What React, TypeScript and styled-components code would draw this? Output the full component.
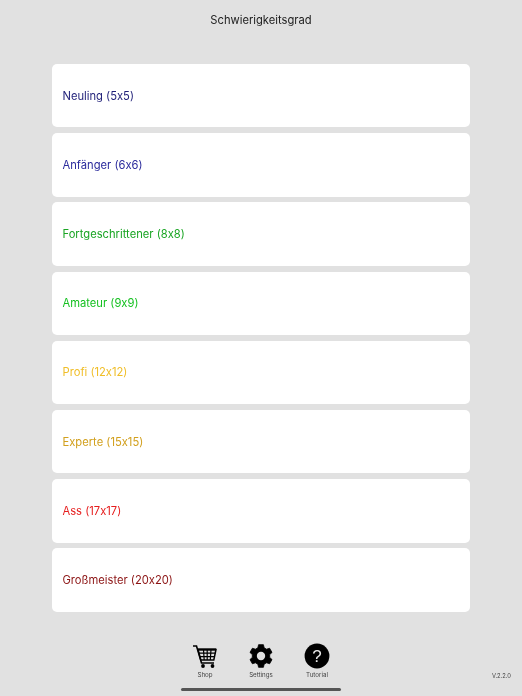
import React from "react";
import styled, { createGlobalStyle } from "styled-components";

const Global = createGlobalStyle`
  html, body { margin: 0; padding: 0; background: #e1e1e1; }
  body {
    font-family: Inter, "Liberation Sans", Arial, sans-serif;
    font-feature-settings: "calt" 0;
  }
`;

const Page = styled.div`
  position: relative;
  width: 522px;
  height: 696px;
  overflow: hidden;
  background: #e1e1e1;
  filter: blur(0.3px);
`;

const Title = styled.h1`
  margin: 0;
  height: 64px;
  padding-top: 13px;
  box-sizing: border-box;
  text-align: center;
  font-size: 11.2px;
  line-height: 15px;
  font-weight: 400;
  color: #222;
`;

const List = styled.div`
  display: flex;
  flex-direction: column;
  gap: 5.8px;
  margin: 0 52px;
`;

const Row = styled.div<{ $color: string }>`
  height: 63.4px;
  display: flex;
  align-items: center;
  padding-left: 10.5px;
  background: #fff;
  border-radius: 5px;
  font-size: 11.2px;
  color: ${(p) => p.$color};
`;

const Footer = styled.div`
  display: grid;
  grid-template-columns: 1fr auto 1fr;
  margin-top: 31.2px;
`;

const Tabs = styled.div`
  grid-column: 2;
  display: flex;
  gap: 30px;
`;

const Tab = styled.div`
  width: 26px;
  display: flex;
  flex-direction: column;
  align-items: center;
  font-size: 6.2px;
  line-height: 7px;
  white-space: nowrap;
  color: #444;
`;

const IconSlot = styled.div`
  height: 26px;
  margin-bottom: 2px;
  display: flex;
  align-items: center;
  justify-content: center;
`;

const Version = styled.div`
  grid-column: 3;
  justify-self: end;
  align-self: end;
  margin-right: 11px;
  margin-bottom: -2px;
  font-size: 5.8px;
  line-height: 8px;
  color: #444;
`;

const HomeBar = styled.div`
  position: absolute;
  left: 181px;
  bottom: 5px;
  width: 160px;
  height: 3px;
  border-radius: 2px;
  background: #555;
`;

const CartIcon = () => (
  <svg width="26" height="26" viewBox="0 0 26 26" fill="none" stroke="#000">
    <path d="M1 3h3.500L9.500 20H22" strokeWidth="1.600" />
    <path d="M6 6.500h18l-2.200 10.500H8.800z" strokeWidth="1.500" />
    <path d="M6 6.500h18" strokeWidth="2.200" />
    <path d="M11.500 6.500l.7 10.500M15.200 6.500v10.500M19 6.500l-.7 10.500M7 10.200h16.400M8 13.600h14.800" strokeWidth="1.200" />
    <circle cx="11" cy="23" r="1.900" fill="#000" stroke="none" />
    <circle cx="20.500" cy="23" r="1.900" fill="#000" stroke="none" />
  </svg>
);

const gearPath = (() => {
  const pts: string[] = [];
  const polar = (r: number, deg: number) => {
    const a = ((deg - 90) * Math.PI) / 180;
    return `${(13 + r * Math.cos(a)).toFixed(2)} ${(13 + r * Math.sin(a)).toFixed(2)}`;
  };
  for (let i = 0; i < 6; i++) {
    const c = i * 60;
    pts.push(polar(8.8, c - 21), polar(11.6, c - 12), polar(11.6, c + 12), polar(8.8, c + 21));
  }
  return `M${pts.join("L")}z`;
})();

const GearIcon = () => (
  <svg width="26" height="26" viewBox="0 0 26 26">
    <path d={gearPath} fill="#000" stroke="#000" strokeWidth="0.8" strokeLinejoin="round" />
    <circle cx="13" cy="13" r="4.200" fill="#e1e1e1" />
  </svg>
);

const HelpIcon = () => (
  <svg width="26" height="26" viewBox="0 0 26 26">
    <circle cx="13" cy="13" r="12.400" fill="#000" />
    <text x="13" y="19.200" textAnchor="middle" fontSize="17" fontFamily="Liberation Sans, Arial, sans-serif" fill="#e8e8e8">?</text>
  </svg>
);

const levels = [
  { label: "Neuling (5x5)", color: "#1f1f78" },
  { label: "Anfänger (6x6)", color: "#2a2a9c" },
  { label: "Fortgeschrittener (8x8)", color: "#1aa524" },
  { label: "Amateur (9x9)", color: "#14c020" },
  { label: "Profi (12x12)", color: "#f0be28" },
  { label: "Experte (15x15)", color: "#d2a01e" },
  { label: "Ass (17x17)", color: "#e61e1e" },
  { label: "Großmeister (20x20)", color: "#8c1414" },
];

export default function App() {
  return (
    <Page>
      <Global />
      <Title>Schwierigkeitsgrad</Title>
      <List>
        {levels.map((l) => (
          <Row key={l.label} $color={l.color}>{l.label}</Row>
        ))}
      </List>
      <Footer>
        <Tabs>
          <Tab><IconSlot><CartIcon /></IconSlot>Shop</Tab>
          <Tab><IconSlot><GearIcon /></IconSlot>Settings</Tab>
          <Tab><IconSlot><HelpIcon /></IconSlot>Tutorial</Tab>
        </Tabs>
        <Version>V.2.2.0</Version>
      </Footer>
      <HomeBar />
    </Page>
  );
}
